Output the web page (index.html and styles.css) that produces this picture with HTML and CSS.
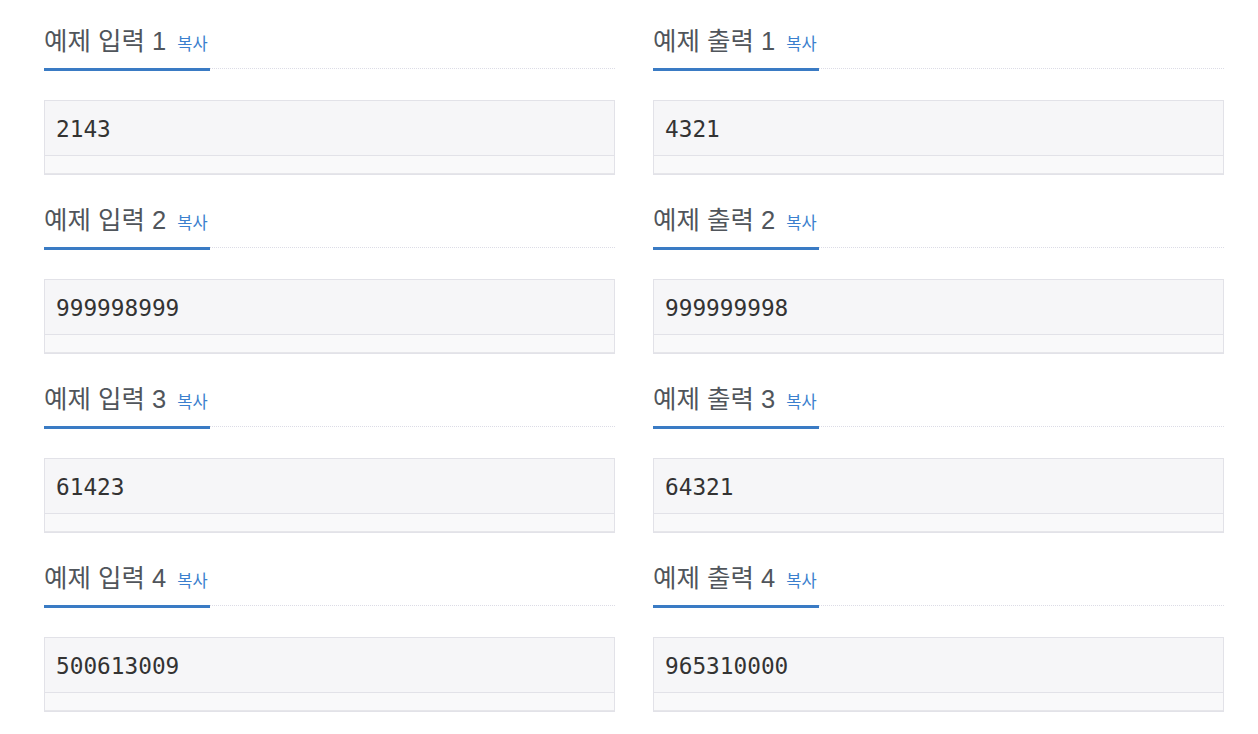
FILE: index.html
```html
<!DOCTYPE html>
<html lang="ko">
<head>
<meta charset="utf-8">
<title>예제</title>
<link rel="stylesheet" href="styles.css">
</head>
<body>
<div class="samples">
  <section class="sample">
    <div class="headline"><h2>예제 입력 1 <span class="copy">복사</span></h2></div>
    <div class="data"><pre>2143</pre><div class="track"></div></div>
  </section>
  <section class="sample">
    <div class="headline"><h2>예제 출력 1 <span class="copy">복사</span></h2></div>
    <div class="data"><pre>4321</pre><div class="track"></div></div>
  </section>
  <section class="sample">
    <div class="headline"><h2>예제 입력 2 <span class="copy">복사</span></h2></div>
    <div class="data"><pre>999998999</pre><div class="track"></div></div>
  </section>
  <section class="sample">
    <div class="headline"><h2>예제 출력 2 <span class="copy">복사</span></h2></div>
    <div class="data"><pre>999999998</pre><div class="track"></div></div>
  </section>
  <section class="sample">
    <div class="headline"><h2>예제 입력 3 <span class="copy">복사</span></h2></div>
    <div class="data"><pre>61423</pre><div class="track"></div></div>
  </section>
  <section class="sample">
    <div class="headline"><h2>예제 출력 3 <span class="copy">복사</span></h2></div>
    <div class="data"><pre>64321</pre><div class="track"></div></div>
  </section>
  <section class="sample">
    <div class="headline"><h2>예제 입력 4 <span class="copy">복사</span></h2></div>
    <div class="data"><pre>500613009</pre><div class="track"></div></div>
  </section>
  <section class="sample">
    <div class="headline"><h2>예제 출력 4 <span class="copy">복사</span></h2></div>
    <div class="data"><pre>965310000</pre><div class="track"></div></div>
  </section>
</div>
</body>
</html>
```
FILE: styles.css
```css
html, body {
  margin: 0;
  padding: 0;
  background: #ffffff;
}

body {
  font-family: "Liberation Sans", "Noto Sans CJK KR", sans-serif;
  color: #333;
}

.samples {
  display: grid;
  grid-template-columns: 571px 571px;
  column-gap: 38px;
  row-gap: 4px;
  padding-left: 44px;
}

.sample {
  display: flex;
  flex-direction: column;
}

.headline {
  display: flex;
  align-items: flex-start;
  border-bottom: 1px dotted #dcdce6;
  margin-top: 24px;
}

.headline h2 {
  margin: 0 0 -3px 0;
  padding: 0 2px 10px 0;
  font-size: 25.5px;
  line-height: 34px;
  height: 34px;
  font-weight: normal;
  color: #50555b;
  border-bottom: 3px solid #3a7bc4;
  white-space: nowrap;
}

.copy {
  font-size: 16.5px;
  color: #3c7fce;
  margin-left: 4px;
}

.data {
  margin-top: 31px;
  border: 1px solid #e2e2e8;
  background: #f6f6f8;
}

.data pre {
  margin: 0;
  padding: 2px 0 0 11px;
  height: 52px;
  font-family: "DejaVu Sans Mono", "Liberation Mono", monospace;
  font-size: 22.75px;
  line-height: 52px;
  color: #333;
}

.track {
  height: 17px;
  border-top: 1px solid #e2e2e8;
  border-bottom: 1px solid #e6e6ea;
  background: #f9f9fa;
}
```
